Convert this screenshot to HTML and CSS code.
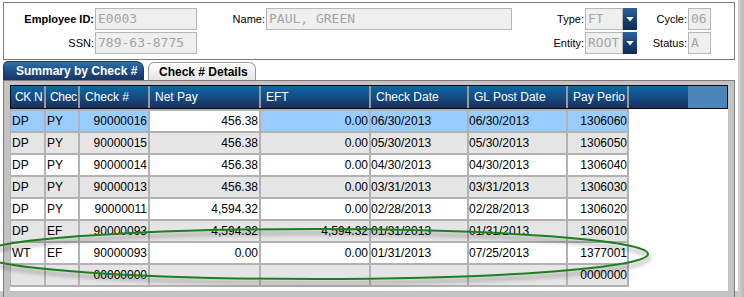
FILE: index.html
```html
<!DOCTYPE html>
<html lang="en">
<head>
  <meta charset="UTF-8" />
  <title>Summary by Check #</title>
  <link rel="stylesheet" href="styles.css">
</head>
<body>
  <div class="tela">
    <div class="principal">

      <!-- dados do empregado -->
      <div class="caixa-emp">
        <div class="rotulo forte">Employee ID:</div>
        <div class="campo">E0003</div>
        <div class="rotulo">Name:</div>
        <div class="campo">PAUL, GREEN</div>
        <div class="rotulo">Type:</div>
        <div class="combo"><div class="campo">FT</div><div class="seta"><svg viewBox="0 0 14 22"><path d="M3.5 9h7l-3.5 4.5z"/></svg></div></div>
        <div class="rotulo">Cycle:</div>
        <div class="campo">06</div>

        <div class="rotulo">SSN:</div>
        <div class="campo">789-63-8775</div>
        <div></div>
        <div></div>
        <div class="rotulo">Entity:</div>
        <div class="combo"><div class="campo">ROOT</div><div class="seta"><svg viewBox="0 0 14 22"><path d="M3.5 9h7l-3.5 4.5z"/></svg></div></div>
        <div class="rotulo">Status:</div>
        <div class="campo">A</div>
      </div>

      <!-- abas -->
      <div class="abas">
        <div class="aba ativa">Summary by Check #</div>
        <div class="aba">Check # Details</div>
      </div>

      <div class="painel">
        <div class="grade">
          <div class="cabecalho">
            <div class="col">CK N</div>
            <div class="col">Chec</div>
            <div class="col">Check #</div>
            <div class="col">Net Pay</div>
            <div class="col">EFT</div>
            <div class="col">Check Date</div>
            <div class="col">GL Post Date</div>
            <div class="col">Pay Perio</div>
            <div class="resto"></div>
            <div class="canto"></div>
          </div>

          <div class="linhas">
            <div class="linha selecionada">
              <div class="c">DP</div><div class="c">PY</div><div class="c dir">90000016</div><div class="c dir foco">456.38</div><div class="c dir">0.00</div><div class="c">06/30/2013</div><div class="c">06/30/2013</div><div class="c dir">1306060</div>
            </div>
            <div class="linha cinza">
              <div class="c">DP</div><div class="c">PY</div><div class="c dir">90000015</div><div class="c dir">456.38</div><div class="c dir">0.00</div><div class="c">05/30/2013</div><div class="c">05/30/2013</div><div class="c dir">1306050</div>
            </div>
            <div class="linha">
              <div class="c">DP</div><div class="c">PY</div><div class="c dir">90000014</div><div class="c dir">456.38</div><div class="c dir">0.00</div><div class="c">04/30/2013</div><div class="c">04/30/2013</div><div class="c dir">1306040</div>
            </div>
            <div class="linha cinza">
              <div class="c">DP</div><div class="c">PY</div><div class="c dir">90000013</div><div class="c dir">456.38</div><div class="c dir">0.00</div><div class="c">03/31/2013</div><div class="c">03/31/2013</div><div class="c dir">1306030</div>
            </div>
            <div class="linha">
              <div class="c">DP</div><div class="c">PY</div><div class="c dir">90000011</div><div class="c dir">4,594.32</div><div class="c dir">0.00</div><div class="c">02/28/2013</div><div class="c">02/28/2013</div><div class="c dir">1306020</div>
            </div>
            <div class="linha cinza">
              <div class="c">DP</div><div class="c">EF</div><div class="c dir">90000093</div><div class="c dir">4,594.32</div><div class="c dir">4,594.32</div><div class="c">01/31/2013</div><div class="c">01/31/2013</div><div class="c dir">1306010</div>
            </div>
            <div class="linha">
              <div class="c">WT</div><div class="c">EF</div><div class="c dir">90000093</div><div class="c dir">0.00</div><div class="c dir">0.00</div><div class="c">01/31/2013</div><div class="c">07/25/2013</div><div class="c dir">1377001</div>
            </div>
            <div class="linha cinza">
              <div class="c"></div><div class="c"></div><div class="c dir">00000000</div><div class="c dir"></div><div class="c dir"></div><div class="c"></div><div class="c"></div><div class="c dir">0000000</div>
            </div>
          </div>
        </div>
      </div>
    </div>
    <div class="sombra"></div>
  </div>

  <!-- marcação verde por cima da tela -->
  <svg class="marca" viewBox="0 0 744 297">
    <ellipse cx="314" cy="254" rx="334" ry="25"/>
  </svg>
</body>
</html>
```

FILE: styles.css
```css
body {
  margin: 0;
  background: white;
  font-family: "Liberation Sans", Arial, sans-serif;
  position: relative;
  width: 744px;
  height: 297px;
  overflow: hidden;
}

.tela {
  display: flex;
  height: 297px;
  overflow: hidden;
  background: linear-gradient(to bottom, white 291px, #c6c6c6 291px);
}

.principal {
  width: 738px;
  padding: 2px 0 0 3px;
  box-sizing: border-box;
  display: flex;
  flex-direction: column;
}

.sombra {
  width: 6px;
  background: linear-gradient(to right, #d2d2d2, #b8b8b8);
}

/* CAIXA DO EMPREGADO */
.caixa-emp {
  width: 732px;
  box-sizing: border-box;
  border: 1px solid #7c7c7c;
  padding: 5px 0;
  display: grid;
  grid-template-columns: 91px 102px 69px 246px 73px 52px 51px 23px;
  grid-template-rows: 22px 22px;
  row-gap: 2px;
}

.rotulo {
  font-size: 11px;
  line-height: 22px;
  text-align: right;
  padding-right: 1px;
  color: #000;
}

.forte {
  font-weight: bold;
}

.campo {
  border: 1px solid #b6b6b6;
  background: #efefef;
  color: #a4a4a4;
  font-family: "DejaVu Sans Mono", monospace;
  font-size: 13px;
  line-height: 20px;
  padding-left: 2px;
  white-space: nowrap;
  overflow: hidden;
}

.combo {
  display: flex;
}

.combo .campo {
  flex: 1;
}

.seta {
  width: 14px;
  background: linear-gradient(to bottom, #2d629d, #173d6c 60%, #0f2b55);
}

.seta svg {
  width: 14px;
  height: 22px;
  display: block;
  fill: white;
}

/* ABAS */
.abas {
  display: flex;
  align-items: flex-end;
  gap: 4px;
  margin-top: 1px;
  height: 19px;
}

.aba {
  font-size: 12px;
  font-weight: bold;
  height: 18px;
  line-height: 18px;
  box-sizing: border-box;
  width: 108px;
  padding-left: 10px;
  border: 1px solid #9a9a9a;
  border-bottom: none;
  border-radius: 6px 7px 0 0;
  background: linear-gradient(to bottom, #ffffff, #e4e4e4);
  color: #000;
}

.aba.ativa {
  width: 141px;
  height: 19px;
  line-height: 19px;
  padding-left: 12px;
  border-color: #1b3766;
  border-radius: 5px 8px 0 0;
  background: linear-gradient(to bottom, #2b72ab, #1d4b82 55%, #1a3464);
  color: white;
}

/* PAINEL DA GRADE */
.painel {
  width: 732px;
  box-sizing: border-box;
  border: 1px solid #7a7a7a;
  border-bottom: none;
  background: #c3c3c3;
  padding: 4px 6px 6px 6px;
}

.grade {
  background: white;
  height: 206px;
}

.cabecalho {
  display: flex;
  height: 24px;
  box-sizing: border-box;
  border: 1px solid #0a0a0a;
  background: linear-gradient(to bottom, #0c68a4, #144d86 50%, #1c2f5c);
  color: white;
  font-size: 12px;
  line-height: 22px;
}

.col {
  box-sizing: border-box;
  border-right: 2px solid #9a9a9a;
  padding-left: 5px;
  white-space: nowrap;
  overflow: hidden;
}

.resto {
  width: 59px;
}

.canto {
  flex: 1;
  background: #4a84b8;
}

.cabecalho .col:nth-child(1), .linha .c:nth-child(1) { width: 35px; }
.cabecalho .col:nth-child(2), .linha .c:nth-child(2) { width: 34px; }
.cabecalho .col:nth-child(3), .linha .c:nth-child(3) { width: 70px; }
.cabecalho .col:nth-child(4), .linha .c:nth-child(4) { width: 111px; }
.cabecalho .col:nth-child(5), .linha .c:nth-child(5) { width: 110px; }
.cabecalho .col:nth-child(6), .linha .c:nth-child(6) { width: 98px; }
.cabecalho .col:nth-child(7), .linha .c:nth-child(7) { width: 99px; }
.cabecalho .col:nth-child(8), .linha .c:nth-child(8) { width: 61px; }

.cabecalho .col:nth-child(1), .cabecalho .col:nth-child(2) {
  padding-left: 4px;
  letter-spacing: -0.3px;
}

.linhas {
  width: 619px;
  border-bottom: 2px solid #b2b2b2;
}

.linha {
  display: flex;
  border-left: 1px solid #b2b2b2;
  font-size: 12px;
  line-height: 20px;
  color: #000;
}

.c {
  box-sizing: border-box;
  height: 22px;
  border-top: 2px solid #b2b2b2;
  border-right: 2px solid #b2b2b2;
  padding: 0 1px;
  white-space: nowrap;
  overflow: hidden;
  background: white;
}

.linha .c:nth-child(6), .linha .c:nth-child(7) {
  padding-left: 0;
}

.linha .c:nth-child(8) {
  padding-right: 0;
}

.dir {
  text-align: right;
}

.cinza .c {
  background: #e5e5e5;
}

.selecionada .c {
  background: #99ccff;
}

.selecionada .c.foco {
  background: white;
}

/* MARCAÇÃO */
.marca {
  position: absolute;
  left: 0;
  top: 0;
  width: 744px;
  height: 297px;
  overflow: visible;
  pointer-events: none;
  fill: none;
  stroke: #1e7f1e;
  stroke-width: 2;
  filter: drop-shadow(1px 4px 2px rgba(0, 0, 0, 0.4));
}
```
